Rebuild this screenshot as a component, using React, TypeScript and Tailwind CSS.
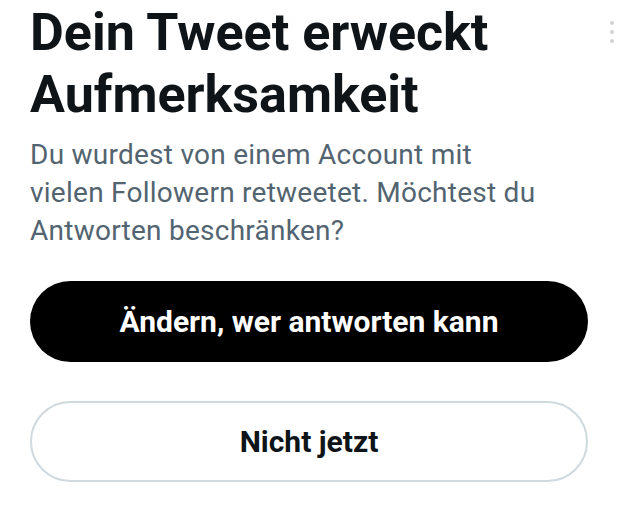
export default function App() {
  return (
    <div className="relative w-[640px] h-[508px] bg-white overflow-hidden font-['Roboto',sans-serif]">
      <div className="absolute right-[26px] top-[21px] flex flex-col gap-[5px]">
        <span className="w-[4px] h-[4px] rounded-full bg-[#cfd3d7]" />
        <span className="w-[4px] h-[4px] rounded-full bg-[#cfd3d7]" />
        <span className="w-[4px] h-[4px] rounded-full bg-[#cfd3d7]" />
      </div>
      <div className="pl-[30px] pr-[40px]">
        <h1 className="mt-[2px] text-[52px] leading-[62px] font-bold text-[#0f1419]">
          Dein Tweet erweckt
          <br />
          Aufmerksamkeit
        </h1>
        <p className="mt-[10px] text-[28px] leading-[38px] tracking-[0.25px] text-[#536471]">
          Du wurdest von einem Account mit
          <br />
          vielen Followern retweetet. Möchtest du
          <br />
          Antworten beschränken?
        </p>
      </div>
      <div className="mt-[31px] pl-[30px] flex flex-col gap-[39px]">
        <button className="w-[558px] h-[81px] rounded-full bg-black text-white text-[30px] font-bold">
          Ändern, wer antworten kann
        </button>
        <button className="w-[558px] h-[81px] rounded-full bg-white border-2 border-[#cfd9de] text-[#0f1419] text-[30px] font-bold">
          Nicht jetzt
        </button>
      </div>
    </div>
  )
}
